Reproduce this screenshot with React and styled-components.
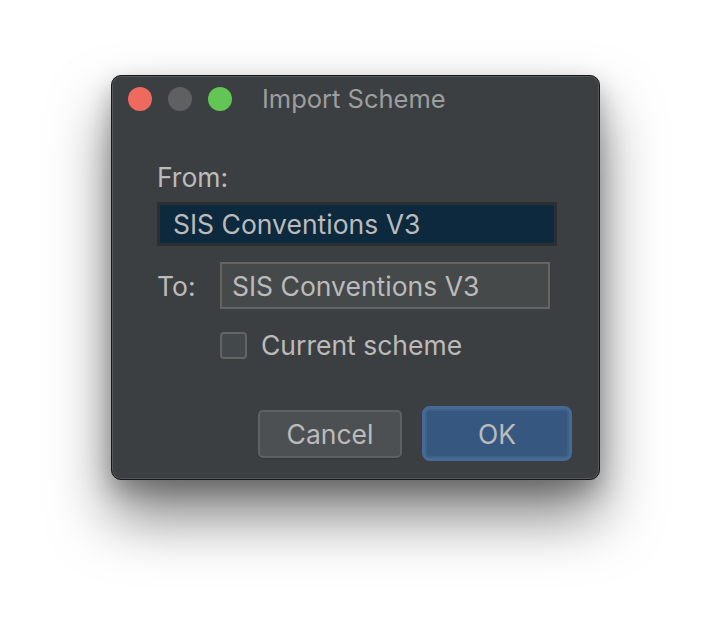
import React from "react";
import styled, { createGlobalStyle } from "styled-components";

const Global = createGlobalStyle`
  html, body { margin: 0; padding: 0; background: #ffffff; }
  body { font-family: Inter, "Liberation Sans", sans-serif; -webkit-font-smoothing: antialiased; }
`;

const Stage = styled.div`
  width: 712px;
  height: 628px;
  box-sizing: border-box;
  padding: 75px 0 0 111px;
  background: #ffffff;
`;

const Dialog = styled.div`
  width: 489px;
  height: 405px;
  box-sizing: border-box;
  background: #3c3f41;
  border: 1px solid #161718;
  border-radius: 10px;
  box-shadow: inset 0 0 0 1px #56595b, 0 36px 60px rgba(0, 0, 0, 0.5),
    0 10px 24px rgba(0, 0, 0, 0.25);
  display: flex;
  flex-direction: column;
  overflow: hidden;
`;

const TitleBar = styled.div`
  height: 45px;
  display: flex;
  align-items: center;
  padding-left: 16px;
  gap: 16px;
`;

const Light = styled.span`
  width: 24px;
  height: 24px;
  border-radius: 50%;
  background: ${(p) => p.$c};
  flex: none;
`;

const Title = styled.div`
  margin-left: 14px;
  color: #9d9e9f;
  font-size: 25.5px;
`;

const Body = styled.div`
  display: flex;
  flex-direction: column;
  padding: 0 44px 0 45px;
`;

const Label = styled.div`
  color: #bbbbbb;
  font-size: 26.5px;
  line-height: 30px;
  margin-top: ${(p) => p.$mt || 0}px;
`;

const Field = styled.div`
  box-sizing: border-box;
  height: ${(p) => p.$h}px;
  width: ${(p) => p.$w}px;
  display: flex;
  align-items: center;
  font-size: 26.5px;
  color: #bbbbbb;
  padding-left: ${(p) => p.$pl}px;
  background: ${(p) => (p.$focus ? "#0d293e" : "#45494a")};
  border: ${(p) => (p.$focus ? "3px solid #2b2f31" : "2px solid #646464")};
`;

const FromField = styled(Field)`
  margin-top: 10px;
`;

const ToRow = styled.div`
  display: flex;
  align-items: center;
  margin-top: 16px;
`;

const ToLabel = styled(Label)`
  width: 63px;
  flex: none;
`;

const CheckRow = styled.div`
  display: flex;
  align-items: center;
  gap: 14px;
  margin-top: 20px;
  padding-left: 63px;
`;

const Box = styled.span`
  width: 27px;
  height: 27px;
  box-sizing: border-box;
  border: 2px solid #646464;
  border-radius: 4px;
  background: #43494a;
  flex: none;
`;

const CheckLabel = styled.span`
  color: #bbbbbb;
  font-size: 26.5px;
`;

const Buttons = styled.div`
  display: flex;
  justify-content: flex-end;
  align-items: center;
  gap: 20px;
  padding-right: 27px;
  margin-top: 45px;
`;

const Button = styled.div`
  box-sizing: border-box;
  width: ${(p) => p.$w}px;
  height: ${(p) => p.$h}px;
  display: flex;
  align-items: center;
  justify-content: center;
  font-size: 26.5px;
  color: #bbbbbb;
  border-radius: ${(p) => (p.$primary ? 8 : 5)}px;
  background: ${(p) => (p.$primary ? "#365880" : "#4c5052")};
  border: ${(p) => (p.$primary ? "3px solid #46699a" : "2px solid #5e6163")};
  box-shadow: ${(p) =>
    p.$primary ? "inset 0 0 0 2px #3e6186" : "0 1px 0 rgba(0,0,0,0.15)"};
`;

export default function App() {
  return (
    <>
      <Global />
      <Stage>
        <Dialog>
          <TitleBar>
            <Light $c="#ee6a5f" />
            <Light $c="#5f6062" />
            <Light $c="#62c554" />
            <Title>Import Scheme</Title>
          </TitleBar>
          <Body>
            <Label $mt={41}>From:</Label>
            <FromField $focus $w={400} $h={44} $pl={13}>
              SIS Conventions V3
            </FromField>
            <ToRow>
              <ToLabel>To:</ToLabel>
              <Field $w={330} $h={47} $pl={10}>
                SIS Conventions V3
              </Field>
            </ToRow>
            <CheckRow>
              <Box />
              <CheckLabel>Current scheme</CheckLabel>
            </CheckRow>
          </Body>
          <Buttons>
            <Button $w={144} $h={48}>Cancel</Button>
            <Button $primary $w={150} $h={55}>OK</Button>
          </Buttons>
        </Dialog>
      </Stage>
    </>
  );
}
